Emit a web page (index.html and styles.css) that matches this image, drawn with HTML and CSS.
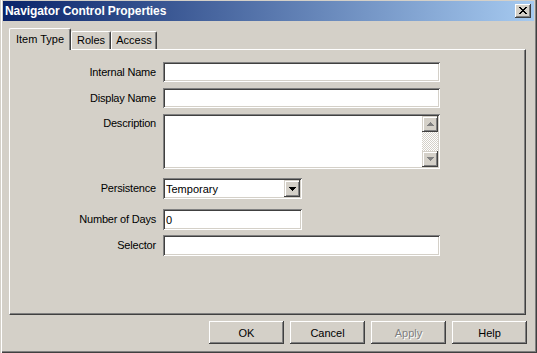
FILE: index.html
```html
<!DOCTYPE html>
<html lang="en">
<head>
    <meta charset="UTF-8">
    <meta name="viewport" content="width=device-width, initial-scale=1.0">
    <title>Navigator Control Properties</title>
    <link rel="stylesheet" href="styles.css">
</head>
<body>
    <div class="window">
        <!-- title bar -->
        <div class="titlebar">
            <span class="title">Navigator Control Properties</span>
            <div class="close">
                <svg width="8" height="7" viewBox="0 0 8 7" shape-rendering="crispEdges">
                    <path d="M0 0h2v1H0z M6 0h2v1H6z M1 1h2v1H1z M5 1h2v1H5z M2 2h4v1H2z M3 3h2v1H3z M2 4h4v1H2z M1 5h2v1H1z M5 5h2v1H5z M0 6h2v1H0z M6 6h2v1H6z" fill="#000"/>
                </svg>
            </div>
        </div>

        <!-- tabs -->
        <div class="tabs">
            <div class="tab active tab-item">Item Type</div>
            <div class="tab tab-roles">Roles</div>
            <div class="tab tab-access">Access</div>
        </div>

        <div class="panel">
            <div class="row row-1">
                <label for="internalName">Internal Name</label>
                <input type="text" id="internalName" class="field wide">
            </div>
            <div class="row row-2">
                <label for="displayName">Display Name</label>
                <input type="text" id="displayName" class="field wide">
            </div>
            <div class="row row-3">
                <label class="top">Description</label>
                <div class="memo wide">
                    <div class="scroll">
                        <div class="sbtn">
                            <svg width="7" height="4" viewBox="0 0 7 4" shape-rendering="crispEdges"><path d="M3 0h1v1h1v1h1v1h1v1H0V3h1V2h1V1h1z" fill="#808080"/></svg>
                        </div>
                        <div class="track"></div>
                        <div class="sbtn">
                            <svg width="7" height="4" viewBox="0 0 7 4" shape-rendering="crispEdges"><path d="M0 0h7v1H6v1H5v1H4v1H3V3H2V2H1V1H0z" fill="#808080"/></svg>
                        </div>
                    </div>
                </div>
            </div>
            <div class="row row-4">
                <label>Persistence</label>
                <div class="select short">
                    <span class="select-text">Temporary</span>
                    <div class="drop">
                        <svg width="7" height="4" viewBox="0 0 7 4" shape-rendering="crispEdges"><path d="M0 0h7v1H6v1H5v1H4v1H3V3H2V2H1V1H0z" fill="#000"/></svg>
                    </div>
                </div>
            </div>
            <div class="row row-5">
                <label for="days">Number of Days</label>
                <input type="text" id="days" class="field short tall" value="0">
            </div>
            <div class="row row-6">
                <label for="selector">Selector</label>
                <input type="text" id="selector" class="field wide tall">
            </div>
        </div>

        <div class="buttons">
            <button class="btn">OK</button>
            <button class="btn">Cancel</button>
            <button class="btn disabled">Apply</button>
            <button class="btn">Help</button>
        </div>
    </div>
</body>
</html>
```

FILE: styles.css
```css
body {
    margin: 0;
    background-color: #d4d0c8;
    font-family: "Liberation Sans", Arial, sans-serif;
    font-size: 11px;
    color: #000;
}

.window {
    width: 537px;
    height: 353px;
    box-sizing: border-box;
    padding: 1px 3px 3px 3px;
    box-shadow: inset 1px 0 #d4d0c8, inset 2px 0 #fff, inset -1px -1px #404040, inset -2px -2px #808080;
}

/* title bar */
.titlebar {
    height: 20px;
    display: flex;
    justify-content: space-between;
    background: linear-gradient(to right, #0a246a, #a6caf0);
}

.title {
    color: #fff;
    font-weight: bold;
    font-size: 12px;
    letter-spacing: -0.1px;
    line-height: 20px;
    padding-left: 2px;
}

.close {
    width: 16px;
    height: 14px;
    margin: 3px 3px 0 0;
    background-color: #d4d0c8;
    box-shadow: inset -1px -1px #404040, inset 1px 1px #fff, inset -2px -2px #808080;
    display: flex;
    align-items: center;
    justify-content: center;
}

.close svg {
    margin: -1px 0 0 -1px;
}

/* tabs */
.tabs {
    display: flex;
    align-items: flex-end;
    height: 21px;
    margin: 7px 0 0 6px;
}

.tab {
    height: 18px;
    box-sizing: border-box;
    padding-top: 2px;
    line-height: 13px;
    text-align: center;
    background-color: #d4d0c8;
    border-top: 1px solid #fff;
    border-left: 1px solid #fff;
    border-right: 1px solid #404040;
    border-radius: 2px 2px 0 0;
    box-shadow: inset -1px 0 #808080;
}

.tab.active {
    height: 22px;
    margin-bottom: -1px;
    padding-top: 4px;
    position: relative;
    z-index: 1;
}

.tab-item {
    width: 62px;
}

.tab-roles {
    width: 40px;
}

.tab-access {
    width: 46px;
}

/* panel */
.panel {
    width: 517px;
    height: 266px;
    box-sizing: border-box;
    margin-left: 6px;
    padding-top: 12px;
    border-top: 1px solid #fff;
    border-left: 1px solid #fff;
    border-right: 1px solid #404040;
    border-bottom: 1px solid #404040;
    box-shadow: inset -1px -1px #808080;
}

.row {
    display: flex;
    align-items: center;
}

.row label {
    width: 146px;
    margin-right: 7px;
    text-align: right;
    line-height: 13px;
    letter-spacing: -0.2px;
}

.row label.top {
    align-self: flex-start;
    padding-top: 3px;
}

.row-1,
.row-2 {
    margin-bottom: 6px;
}

.row-3 {
    margin-bottom: 9px;
}

.row-4 {
    margin-bottom: 10px;
}

.row-5 {
    margin-bottom: 5px;
}

.field,
.memo,
.select {
    box-sizing: border-box;
    background-color: #fff;
    box-shadow: inset 1px 1px #808080, inset -1px -1px #fff, inset 2px 2px #404040, inset -2px -2px #d4d0c8;
}

.field {
    height: 20px;
    border: 0;
    margin: 0;
    padding: 0 3px;
    font: inherit;
    color: #000;
    outline: none;
}

.field.tall {
    height: 21px;
}

.wide {
    width: 277px;
}

.short {
    width: 139px;
}

.memo {
    height: 55px;
    padding: 2px;
    display: flex;
    justify-content: flex-end;
}

.scroll {
    width: 16px;
    display: flex;
    flex-direction: column;
}

.sbtn,
.drop {
    width: 16px;
    height: 16px;
    box-sizing: border-box;
    background-color: #d4d0c8;
    box-shadow: inset -1px -1px #404040, inset 1px 1px #d4d0c8, inset 2px 2px #fff, inset -2px -2px #808080;
    display: flex;
    align-items: center;
    justify-content: center;
}

.track {
    flex: 1;
    background-image: conic-gradient(#fff 25%, #d4d0c8 0 50%, #fff 0 75%, #d4d0c8 0);
    background-size: 2px 2px;
}

.select {
    height: 21px;
    padding: 2px;
    display: flex;
    align-items: center;
}

.select-text {
    padding-left: 1px;
}

.drop {
    margin-left: auto;
    height: 17px;
}

/* dialog buttons */
.buttons {
    display: flex;
    justify-content: flex-end;
    gap: 6px;
    margin: 6px 7px 0 0;
}

.btn {
    width: 75px;
    height: 23px;
    padding: 0;
    border: 0;
    font: inherit;
    color: #000;
    background-color: #d4d0c8;
    box-shadow: inset -1px -1px #404040, inset 1px 1px #fff, inset -2px -2px #808080;
}

.btn.disabled {
    color: #808080;
    text-shadow: 1px 1px #fff;
}
```
